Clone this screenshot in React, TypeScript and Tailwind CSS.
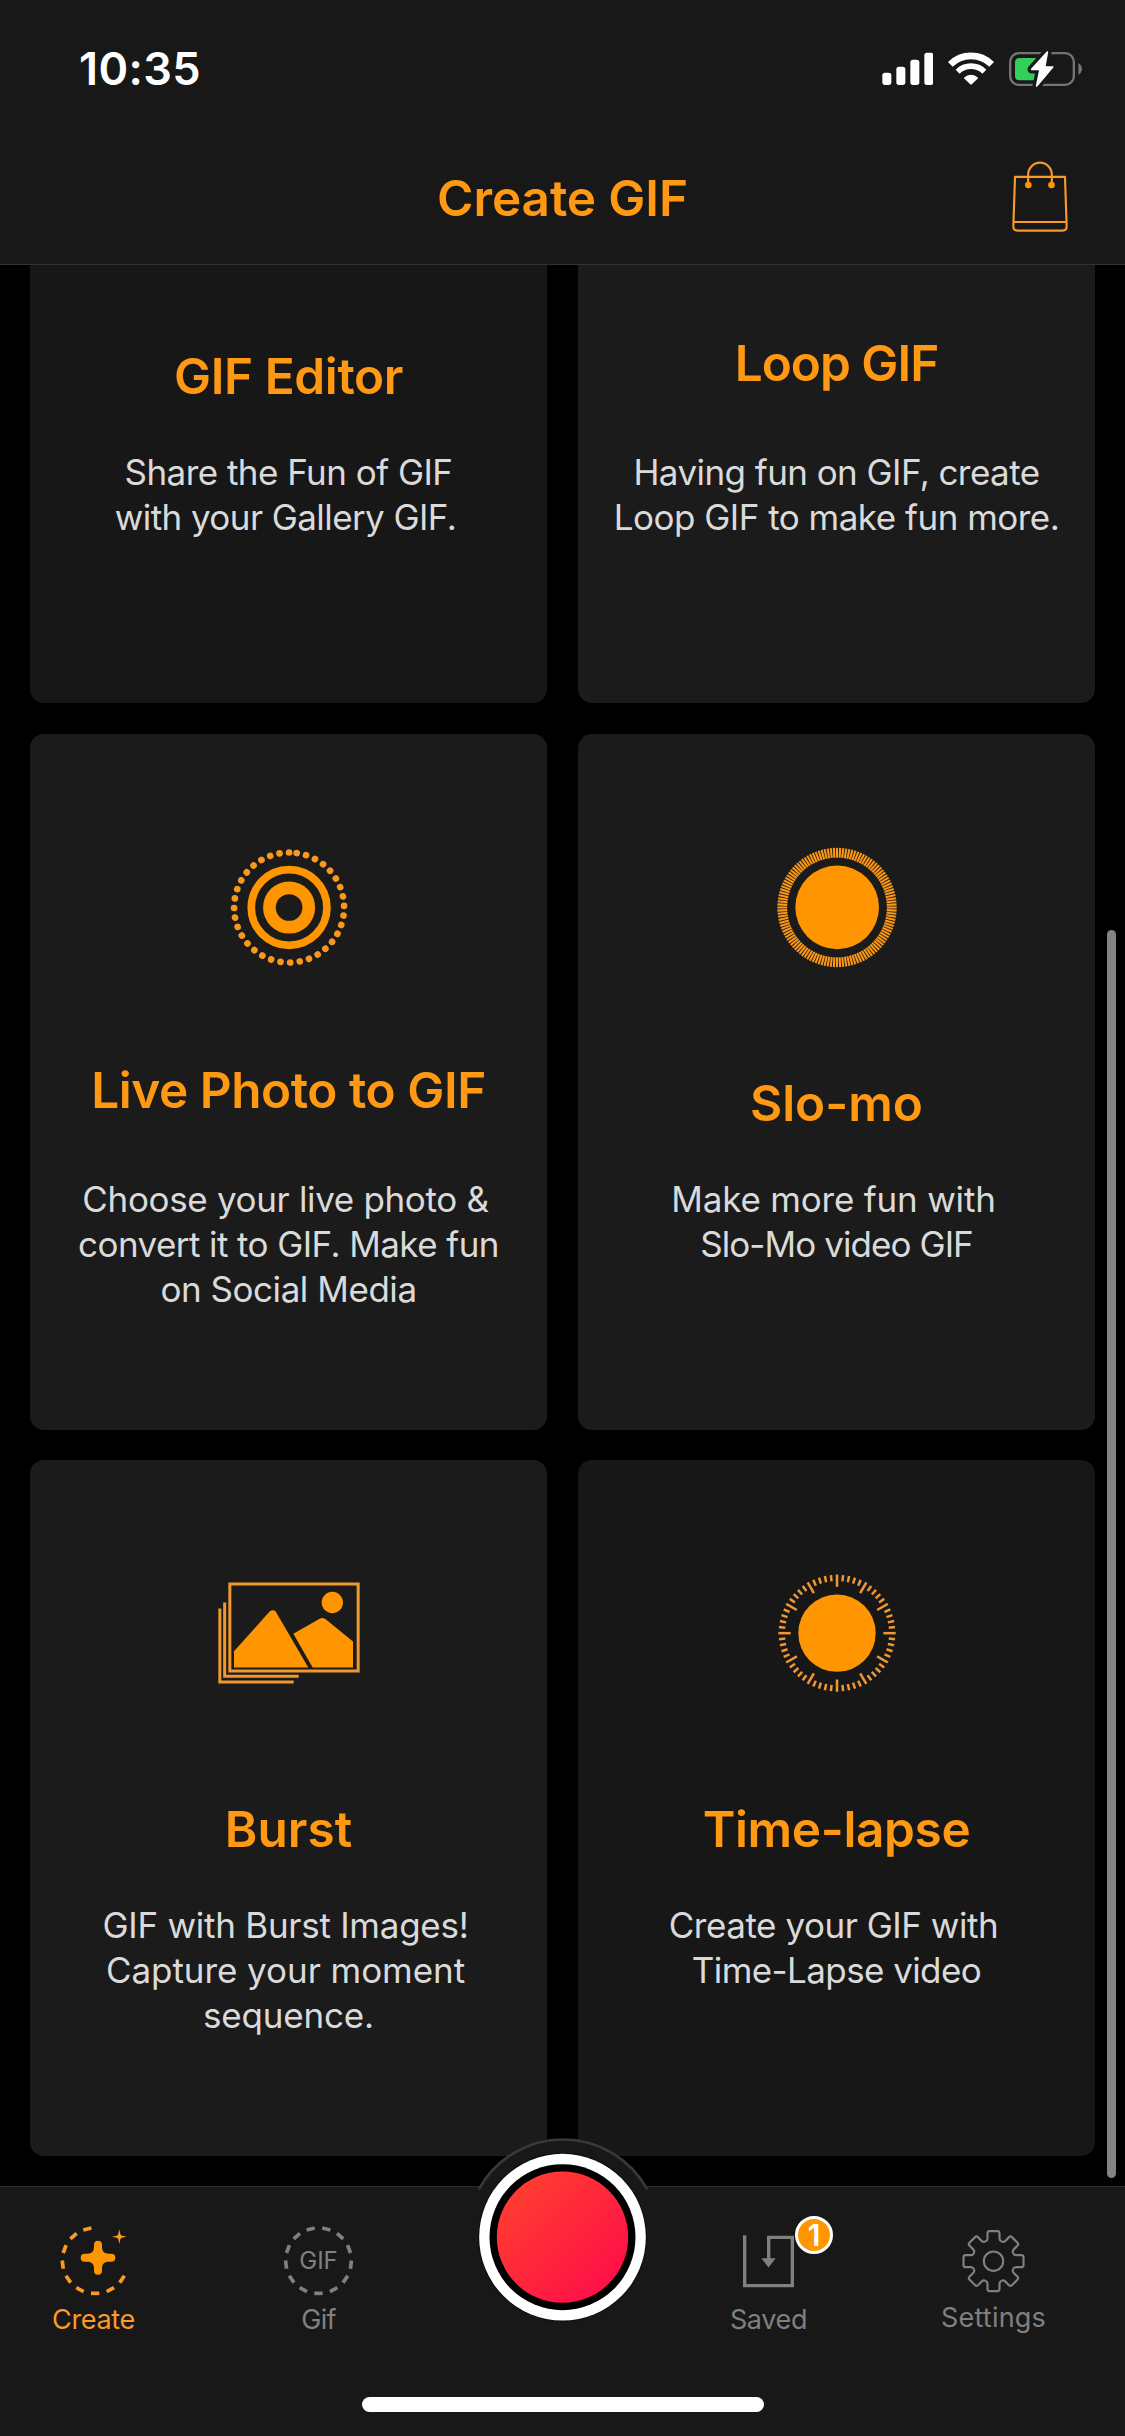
import type { ReactNode } from "react";
import clsx from "clsx";

type Line = { text: string; className?: string };

type Card = {
  title: string;
  titleClass: string;
  bg: string;
  // cards with a short icon box sit their title slightly higher
  raised?: boolean;
  icon?: ReactNode;
  lines: Line[];
};

const range = (n: number) => Array.from({ length: n }, (_, i) => i);

function SignalIcon() {
  return (
    <svg viewBox="65 60 155 114" className="h-[38px] w-[51.7px]" fill="#fff">
      <rect x="66" y="128" width="27" height="37" rx="8" />
      <rect x="108" y="110" width="27" height="55" rx="8" />
      <rect x="150" y="89" width="27" height="76" rx="8" />
      <rect x="192" y="68" width="27" height="97" rx="8" />
    </svg>
  );
}

function WifiIcon() {
  return (
    <svg viewBox="264 60 138 114" className="h-[38px] w-[46px]" fill="none" stroke="#fff">
      <path d="M271 103A88 88 0 0 1 395 103" strokeWidth="20" />
      <path d="M293 125A57 57 0 0 1 373 125" strokeWidth="17" />
      <path d="M333 162L314 144A28 28 0 0 1 352 144Z" fill="#fff" strokeWidth="4" strokeLinejoin="round" />
    </svg>
  );
}

function BatteryIcon() {
  const bolt = "M562 66L515 118H540L530 168L578 111H554Z";
  return (
    <svg viewBox="447 60 221 114" className="h-[38px] w-[73.7px]" fill="none" strokeLinejoin="round">
      <rect x="450.500" y="69.500" width="191" height="95" rx="26" stroke="#757575" strokeWidth="7" />
      <path d="M655 99C662 104 666 109 666 117S662 130 655 135Z" fill="#757575" />
      <path d="M479 84H545L530 151H479Q465 151 465 137V98Q465 84 479 84Z" fill="#32d058" />
      <path d={bolt} fill="#181818" stroke="#181818" strokeWidth="25" />
      <path d={bolt} fill="#fff" stroke="#fff" strokeWidth="5" />
    </svg>
  );
}

function BagIcon() {
  return (
    <svg viewBox="450 391 180 226" className="h-[75.3px] w-[60px]" fill="none" stroke="#f79a2a" strokeWidth="6.500">
      <path d="M465 441.500H615L620 590Q620 603 608 603H472Q460 603 460 590Z" strokeLinejoin="round" />
      <path d="M461 577H619" />
      <path d="M504.500 466V435A35.500 36 0 0 1 575.500 435V466" />
      <circle cx="505" cy="466" r="10" fill="#ff9500" stroke="none" />
      <circle cx="574.500" cy="466" r="10" fill="#ff9500" stroke="none" />
    </svg>
  );
}

function LivePhotoIcon() {
  return (
    <svg viewBox="-3 0 540 540" className="size-[180px]" fill="none" stroke="#ff9500">
      <circle cx="267.300" cy="262.500" r="113.500" strokeWidth="23" />
      <circle cx="267.300" cy="262.500" r="59" strokeWidth="38" />
      {range(36).map((i) => (
        <circle
          key={i}
          cx="267.300"
          cy="97.500"
          r="10"
          fill="#f9981f"
          stroke="none"
          transform={`rotate(${-i * 10.06} 267.3 262.5)`}
        />
      ))}
    </svg>
  );
}

function SloMoIcon() {
  return (
    <svg viewBox="-9 0 540 540" className="size-[180px]">
      <circle cx="261.500" cy="262" r="125.500" fill="#ff9500" />
      {range(120).map((i) => (
        <path key={i} d="M261 83.500V113" stroke="#fb9714" strokeWidth="6.200" transform={`rotate(${i * 3} 261 262.5)`} />
      ))}
    </svg>
  );
}

function BurstIcon() {
  return (
    <svg viewBox="-3 -40.5 540 540" className="size-[180px]" fill="none" stroke="#f0982e" strokeWidth="9">
      <rect x="89.500" y="73.500" width="385" height="261" />
      <path d="M74 129V350.500H296" />
      <path d="M59.500 147V367.500H281" />
      <g fill="#ff9500" stroke="none">
        <path d="M102 275L209 156Q218 148 227 156L325 324H102Z" />
        <path d="M280 223L359 178Q368 173 377 179L459 246V324H338Z" />
        <circle cx="397" cy="129" r="32" />
      </g>
    </svg>
  );
}

function TimeLapseIcon() {
  return (
    <svg viewBox="-9 -10.5 540 540" className="size-[180px]">
      <circle cx="261" cy="251" r="116" fill="#ff9500" />
      {range(60).map((i) => (
        <path
          key={i}
          d={i % 5 === 0 ? "M261 75V112" : "M261 76V95"}
          stroke="#ee9733"
          strokeWidth="7.500"
          transform={`rotate(${i * 6} 261 251)`}
        />
      ))}
    </svg>
  );
}

// 13 slots around the ring, slot 0 sits at the bottom
function DashRing({ cx, from, to }: { cx: number; from: number; to: number }) {
  return (
    <g stroke="currentColor" strokeWidth="11">
      {range(to - from + 1).map((i) => (
        <path
          key={i}
          d={`M${cx - 12.5} 341H${cx + 12.5}`}
          transform={`rotate(${((i + from) * 360) / 13} ${cx} 243)`}
        />
      ))}
    </g>
  );
}

function CreateIcon() {
  return (
    <svg viewBox="168 130 228 228" className="size-[76px]">
      <DashRing cx={285.5} from={-2} to={6} />
      <path
        d="M282 195a12 12 0 0 1 24 0V202C306 215 313 222 326 222H334a12 12 0 0 1 0 24H326C313 246 306 253 306 266V273a12 12 0 0 1-24 0V266C282 253 275 246 262 246H254a12 12 0 0 1 0-24H262C275 222 282 215 282 202Z"
        fill="#ff9500"
      />
      <path d="M358 149L361 163Q362 167 366 168L380 171L366 174Q362 175 361 179L358 193L355 179Q354 175 350 174L336 171L350 168Q354 167 355 163Z" fill="currentColor" />
    </svg>
  );
}

function GifIcon() {
  return (
    <div className="grid size-[76px] place-items-center">
      <svg viewBox="843 130 228 228" className="col-start-1 row-start-1 size-[76px]">
        <DashRing cx={955.5} from={0} to={12} />
      </svg>
      <span className="col-start-1 row-start-1 text-2xl leading-none">GIF</span>
    </div>
  );
}

function SavedIcon() {
  return (
    <svg viewBox="93 128.5 228 228" className="size-[76px]" fill="none" stroke="currentColor" strokeWidth="10">
      <path d="M134 165V316.500H277V171.500H206V238" />
      <path d="M184 234H227L205.500 262Z" fill="currentColor" stroke="none" />
    </svg>
  );
}

function GearIcon() {
  return (
    <svg viewBox="-112.5 -114.5 228 228" className="size-[76px]" fill="none" stroke="currentColor" strokeWidth="6.500">
      <circle r="29" />
      {range(8).map((i) => (
        <path
          key={i}
          d="M-24.300-58.700C-19.800-60.600-18-63-18-68V-83Q-18-90-12-90H12Q18-90 18-83V-68C18-63 19.800-60.600 24.300-58.700"
          transform={`rotate(${i * 45})`}
        />
      ))}
    </svg>
  );
}

function RecordButton() {
  return (
    <svg viewBox="132.5 49 594 558" className="h-[186px] w-[198px]">
      <defs>
        <linearGradient id="rec" x1="0.150" y1="0.150" x2="0.850" y2="0.850">
          <stop offset="0" stopColor="#ff3b30" />
          <stop offset="1" stopColor="#ff1148" />
        </linearGradient>
      </defs>
      <path d="M177 206A288 288 0 0 1 682 206" fill="#181818" stroke="#393939" strokeWidth="8" />
      <circle cx="428" cy="349.500" r="253" fill="#0c0c0c" />
      <circle cx="428" cy="349.500" r="250" fill="#fff" />
      <circle cx="428" cy="349.500" r="219" fill="#000" />
      <circle cx="428" cy="349.500" r="197" fill="url(#rec)" />
    </svg>
  );
}

const cards: Card[] = [
  {
    title: "GIF Editor",
    titleClass: "tracking-[-0.4px]",
    bg: "bg-[#171717]",
    lines: [
      { text: "Share the Fun of GIF", className: "tracking-[-0.54px]" },
      { text: "with your Gallery GIF.", className: "pr-1.5 tracking-[-0.58px]" },
    ],
  },
  {
    title: "Loop GIF",
    titleClass: "tracking-[-1px]",
    bg: "bg-[#1b1b1b]",
    raised: true,
    lines: [
      { text: "Having fun on GIF, create", className: "tracking-[-0.56px]" },
      { text: "Loop GIF to make fun more.", className: "tracking-[-0.51px]" },
    ],
  },
  {
    title: "Live Photo to GIF",
    titleClass: "tracking-[-0.45px]",
    bg: "bg-[#1b1b1b]",
    raised: true,
    icon: <LivePhotoIcon />,
    lines: [
      { text: "Choose your live photo &", className: "pr-1.5 tracking-[-0.34px]" },
      { text: "convert it to GIF. Make fun", className: "tracking-[-0.58px]" },
      { text: "on Social Media", className: "tracking-[-0.45px]" },
    ],
  },
  {
    title: "Slo-mo",
    titleClass: "",
    bg: "bg-[#1b1b1b]",
    icon: <SloMoIcon />,
    lines: [
      { text: "Make more fun with", className: "pr-1.5 tracking-[-0.2px]" },
      { text: "Slo-Mo video GIF", className: "tracking-[-0.92px]" },
    ],
  },
  {
    title: "Burst",
    titleClass: "",
    bg: "bg-[#1b1b1b]",
    icon: <BurstIcon />,
    lines: [
      { text: "GIF with Burst Images!", className: "pr-1.5 tracking-[-0.26px]" },
      { text: "Capture your moment", className: "pr-1.5 tracking-[-0.05px]" },
      { text: "sequence.", className: "tracking-[-0.19px]" },
    ],
  },
  {
    title: "Time-lapse",
    titleClass: "tracking-[-0.35px]",
    bg: "bg-[#171717]",
    icon: <TimeLapseIcon />,
    lines: [
      { text: "Create your GIF with", className: "pr-1.5 tracking-[-0.47px]" },
      { text: "Time-Lapse video", className: "tracking-[-0.59px]" },
    ],
  },
];

function FeatureCard({ card }: { card: Card }) {
  return (
    <div className={clsx("flex h-[696px] flex-col items-center rounded-[14px]", card.bg)}>
      <div className={clsx("pt-[86px]", card.raised ? "h-[326px]" : "h-[339px]")}>{card.icon}</div>
      <h2 className={clsx("text-[49.5px] leading-[60px] font-semibold text-[#ff9812]", card.titleClass)}>{card.title}</h2>
      <div className={clsx("text-center text-[35px] leading-[45px] text-[#dadada]", card.raised ? "pt-[57px]" : "pt-[44px]")}>
        {card.lines.map((l) => (
          <p key={l.text} className={clsx("whitespace-nowrap", l.className)}>{l.text}</p>
        ))}
      </div>
    </div>
  );
}

export default function App() {
  return (
    <div className="flex h-[2436px] w-[1125px] flex-col overflow-hidden bg-black font-['Inter',sans-serif]">
      <header className="h-[265px] shrink-0 border-b border-[#323232] bg-[#181818]">
        <div className="flex h-[132px] items-center justify-between pt-1.5 pr-[42px] pl-[79px]">
          <span className="text-[45px] leading-[54px] font-semibold tracking-[0.4px] text-white">10:35</span>
          <div className="flex items-center gap-[15px]">
            <SignalIcon />
            <WifiIcon />
            <BatteryIcon />
          </div>
        </div>
        <div className="grid h-[132px] grid-cols-[1fr_auto_1fr] items-center pr-[55px] pl-[55px]">
          <span />
          <h1 className="text-[49.5px] leading-[60px] font-semibold tracking-[-0.1px] text-[#ff9812]">Create GIF</h1>
          <button className="justify-self-end">
            <BagIcon />
          </button>
        </div>
      </header>

      <main className="relative min-h-0 flex-1 overflow-hidden">
        <div className="-mt-[258px] grid grid-cols-2 gap-x-[31px] gap-y-[30.5px] px-[30px]">
          {cards.map((c) => (
            <FeatureCard key={c.title} card={c} />
          ))}
        </div>
        <div className="absolute top-[665px] right-[9px] h-[1248px] w-[9px] rounded-full bg-[#838383]" />
      </main>

      <nav className="relative flex h-[250px] shrink-0 flex-col border-t border-[#2b2b2b] bg-[#181818] text-[#808080]">
        <div className="-ml-[19px] flex w-[1125px] flex-1 text-[27px] leading-8">
          <div className="flex w-[225px] flex-col items-center gap-[5px] pt-9 text-[#fb9a24]">
            <CreateIcon />
            <span className="tracking-[-0.31px]">Create</span>
          </div>
          <div className="flex w-[225px] flex-col items-center gap-[5px] pt-9">
            <GifIcon />
            <span className="tracking-[-0.8px]">Gif</span>
          </div>
          <div className="w-[225px]" />
          <div className="relative flex w-[225px] flex-col items-center gap-[5px] pt-9">
            <SavedIcon />
            <span className="tracking-[-0.37px]">Saved</span>
            <span className="absolute top-[29px] left-[139px] flex size-[38px] items-center justify-center rounded-full border-[3px] border-white bg-[#ff9500] text-[30px] leading-none font-semibold text-white">
              1
            </span>
          </div>
          <div className="flex w-[225px] flex-col items-center gap-[3px] pt-9">
            <GearIcon />
            <span className="tracking-[0.23px]">Settings</span>
          </div>
        </div>
        <div className="mx-auto mb-6 h-[15px] w-[402px] rounded-full bg-white" />
        <button className="absolute -top-[50px] left-[463.7px]">
          <RecordButton />
        </button>
      </nav>
    </div>
  );
}
